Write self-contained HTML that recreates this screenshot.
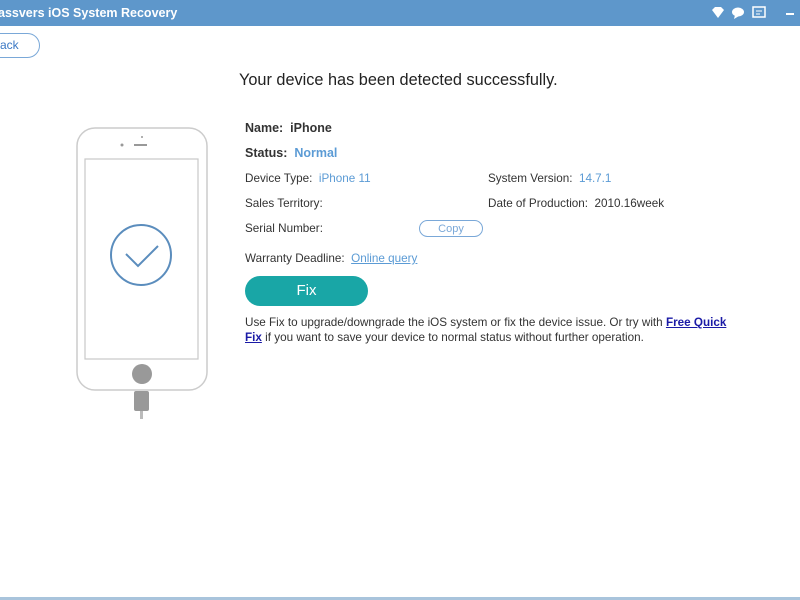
<!DOCTYPE html>
<html><head><style>
*{margin:0;padding:0;box-sizing:border-box}
body{width:800px;height:600px;position:relative;background:#fff;font-family:"Liberation Sans",Tahoma,sans-serif;overflow:hidden;color:#333}
.a{position:absolute;white-space:nowrap}
.bar{left:0;top:0;width:800px;height:26px;background:#5e97cb}
.t{font-size:11.7px}
.v{color:#5b9bd5}
</style></head><body>
<div class="a bar"></div>
<div class="a" style="left:-2px;top:6px;color:#fff;font-weight:bold;font-size:12.5px">assvers iOS System Recovery</div>
<svg class="a" style="left:710px;top:6px" width="90" height="16">
<path d="M2 4 L5 1 L11 1 L14 4 L8 12 Z" fill="#fff"/>
<ellipse cx="28" cy="6" rx="6" ry="4.5" fill="#fff"/><path d="M25 9 L24 13 L29 10Z" fill="#fff"/>
<rect x="43" y="1" width="12" height="10" fill="none" stroke="#fff" stroke-width="1.5"/><path d="M46 5h6M46 8h4" stroke="#fff"/>
<path d="M76 8h8" stroke="#fff" stroke-width="2"/>
</svg>
<div class="a" style="left:-20px;top:33px;width:60px;height:25px;border:1px solid #7aa8d8;border-radius:13px"></div>
<div class="a" style="left:0;top:38px;font-size:12px;color:#3a78c4">ack</div>
<div class="a" style="left:239px;top:71px;font-size:16.3px;color:#222">Your device has been detected successfully.</div>
<svg class="a" style="left:76px;top:127px" width="132" height="294">
<rect x="1" y="1" width="130" height="262" rx="18" fill="#fff" stroke="#ccc" stroke-width="1.5"/>
<rect x="9" y="32" width="113" height="200" fill="#fff" stroke="#c8c8c8" stroke-width="1.2"/>
<circle cx="46" cy="18" r="1.5" fill="#999"/><rect x="58" y="17" width="13" height="2" fill="#999"/><circle cx="66" cy="10" r="1" fill="#999"/>
<circle cx="66" cy="247" r="10" fill="#999"/>
<rect x="58" y="264" width="15" height="20" rx="2" fill="#999"/><rect x="64" y="284" width="3" height="8" fill="#bbb"/>
<circle cx="65" cy="128" r="30" fill="none" stroke="#5b8dbd" stroke-width="2"/>
<path d="M50 127 L62 139 L82 119" fill="none" stroke="#5b8dbd" stroke-width="2"/>
</svg>
<div class="a" style="left:245px;top:121px;font-weight:bold;font-size:12.5px">Name:&nbsp; iPhone</div>
<div class="a" style="left:245px;top:146px;font-weight:bold;font-size:12.5px">Status:&nbsp; <span class="v">Normal</span></div>
<div class="a t" style="left:245px;top:172px">Device Type:&nbsp; <span class="v">iPhone 11</span></div>
<div class="a t" style="left:488px;top:172px">System Version:&nbsp; <span class="v">14.7.1</span></div>
<div class="a t" style="left:245px;top:197px">Sales Territory:</div>
<div class="a t" style="left:488px;top:197px">Date of Production:&nbsp; 2010.16week</div>
<div class="a t" style="left:245px;top:222px">Serial Number:</div>
<div class="a" style="left:419px;top:220px;width:64px;height:17px;border:1px solid #7aa8d8;border-radius:9px;font-size:11px;color:#7aa8d8;text-align:center;line-height:17px">Copy</div>
<div class="a t" style="left:245px;top:252px">Warranty Deadline:&nbsp; <span class="v" style="text-decoration:underline">Online query</span></div>
<div class="a" style="left:245px;top:276px;width:123px;height:30px;background:#19a6a6;border-radius:15px;color:#fff;font-size:15px;text-align:center;line-height:30px">Fix</div>
<div class="a t" style="left:245px;top:315px;line-height:15px">Use Fix to upgrade/downgrade the iOS system or fix the device issue. Or try with <b style="color:#1a1aa6;text-decoration:underline">Free Quick</b><br><b style="color:#1a1aa6;text-decoration:underline">Fix</b> if you want to save your device to normal status without further operation.</div>
<div class="a" style="left:0;top:597px;width:800px;height:3px;background:#a9c4dc"></div>
</body></html>
